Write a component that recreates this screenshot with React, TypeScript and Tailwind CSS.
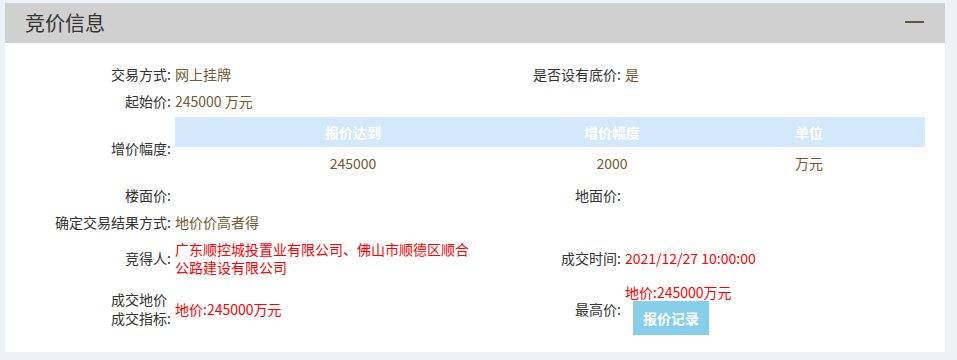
const font = { fontFamily: '"Microsoft YaHei", "Noto Sans CJK SC", sans-serif' };

const steps = [{ reach: "245000", step: "2000", unit: "万元" }];

function Label({ children }: { children: React.ReactNode }) {
  return <div className="pr-[4px] text-right text-[#333]">{children}</div>;
}

export default function App() {
  return (
    <div className="min-h-[360px] bg-[#eef2f6] pl-[5px] pr-[12px] pt-[3px] pb-[8px]" style={font}>
      <div className="bg-white">
        {/* header */}
        <div className="flex h-[40px] items-center justify-between bg-[#d0d0d0] pl-[20px] pr-[21px]">
          <h2 className="text-[20px] leading-none text-[#333]">竞价信息</h2>
          <span className="mt-[-3px] block h-[2px] w-[19px] bg-[#5c5644]" />
        </div>

        {/* body */}
        <div className="grid grid-cols-[170px_300px_150px_1fr] grid-rows-[27px_27px_68px_26px_28px_44px_58px] items-center pt-[17px] pr-[20px] pb-[14px] text-[14px] leading-[18px]">
          <Label>交易方式:</Label>
          <div className="text-[#75592f]">网上挂牌</div>
          <Label>是否设有底价:</Label>
          <div className="text-[#75592f]">是</div>

          <Label>起始价:</Label>
          <div className="col-span-3 text-[#75592f]">245000 万元</div>

          <Label>增价幅度:</Label>
          <div className="col-span-3 self-start pt-[3px]">
            <div className="grid grid-cols-[356px_162px_1fr] bg-[#d3e8fa] font-bold text-white">
              <div className="flex h-[30px] items-center justify-center">报价达到</div>
              <div className="flex h-[30px] items-center justify-center">增价幅度</div>
              <div className="flex h-[30px] items-center justify-center">单位</div>
            </div>
            {steps.map((s) => (
              <div key={s.reach} className="grid grid-cols-[356px_162px_1fr] text-[#75592f]">
                <div className="flex h-[32px] items-center justify-center">{s.reach}</div>
                <div className="flex h-[32px] items-center justify-center">{s.step}</div>
                <div className="flex h-[32px] items-center justify-center">{s.unit}</div>
              </div>
            ))}
          </div>

          <Label>楼面价:</Label>
          <div />
          <Label>地面价:</Label>
          <div />

          <Label>确定交易结果方式:</Label>
          <div className="col-span-3 text-[#75592f]">地价价高者得</div>

          <Label>竞得人:</Label>
          <div className="text-[#ff0000]">广东顺控城投置业有限公司、佛山市顺德区顺合公路建设有限公司</div>
          <Label>成交时间:</Label>
          <div className="text-[#ff0000]">2021/12/27 10:00:00</div>

          <div className="pr-[4px] text-right leading-[19px] text-[#333]">
            <div className="pr-[4px]">成交地价</div>
            <div>成交指标:</div>
          </div>
          <div className="text-[#ff0000]">地价:245000万元</div>
          <Label>最高价:</Label>
          <div>
            <div className="text-[#ff0000]">地价:245000万元</div>
            <button className="ml-[8px] h-[34px] w-[76px] bg-[#87ceeb] font-bold text-white">报价记录</button>
          </div>
        </div>
      </div>
    </div>
  );
}
